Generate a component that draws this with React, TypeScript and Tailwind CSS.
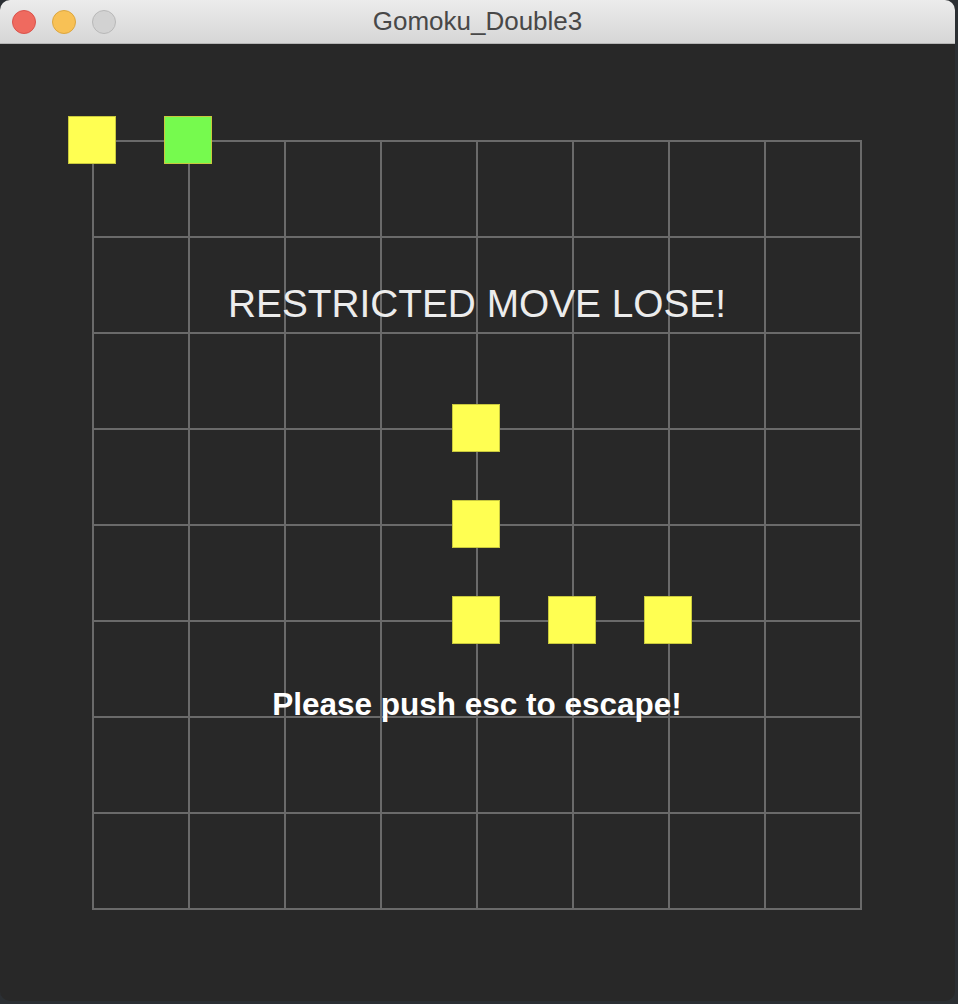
const STONES: [number, number, string][] = [
  [0, 0, "bg-[#ffff52]"],
  [1, 0, "bg-[#76fa4e]"],
  [4, 3, "bg-[#ffff52]"],
  [4, 4, "bg-[#ffff52]"],
  [4, 5, "bg-[#ffff52]"],
  [5, 5, "bg-[#ffff52]"],
  [6, 5, "bg-[#ffff52]"],
];

const LEFT = ["left-[-24px]", "left-[72px]", "left-[168px]", "left-[264px]", "left-[360px]", "left-[456px]", "left-[552px]", "left-[648px]", "left-[744px]"];
const TOP = ["top-[-24px]", "top-[72px]", "top-[168px]", "top-[264px]", "top-[360px]", "top-[456px]", "top-[552px]", "top-[648px]", "top-[744px]"];

export default function App() {
  return (
    <div className="flex h-[1004px] w-[958px] bg-[#2b2f33] font-['Liberation_Sans',Arial,sans-serif]">
      <div className="flex h-[1001px] w-[955px] flex-col overflow-hidden rounded-[10px] bg-[#282828]">
        <div className="relative flex h-[44px] shrink-0 items-center border-b border-[#b5b5b5] bg-gradient-to-b from-[#ececec] to-[#d6d6d6]">
          <div className="flex items-center gap-[16px] pl-[12px]">
            <span className="h-[24px] w-[24px] rounded-full border border-[#d9534c] bg-[#ef6a5f]" />
            <span className="h-[24px] w-[24px] rounded-full border border-[#dba640] bg-[#f8c155]" />
            <span className="h-[24px] w-[24px] rounded-full border border-[#b8b8b8] bg-[#d2d2d2]" />
          </div>
          <p className="absolute inset-x-0 text-center text-[26px] text-[#484848]">Gomoku_Double3</p>
        </div>

        <div className="pl-[92px] pt-[96px]">
          <div className="relative w-[770px]">
            <div className="grid h-[770px] w-[770px] grid-cols-8 border-l-2 border-t-2 border-[#6a6a6a]">
              {Array.from({ length: 64 }).map((_, i) => (
                <div key={i} className="border-b-2 border-r-2 border-[#6a6a6a]" />
              ))}
            </div>

            {STONES.map(([x, y, c]) => (
              <div
                key={`${x}-${y}`}
                className={`absolute h-[48px] w-[48px] border border-[#c8c83e] ${c} ${LEFT[x]} ${TOP[y]}`}
              />
            ))}

            <p className="absolute left-0 right-0 top-[140px] text-center text-[38.8px] leading-[48px] text-[#ececec]">
              RESTRICTED MOVE LOSE!
            </p>
            <p className="absolute left-0 right-0 top-[544px] text-center text-[31.5px] font-bold leading-[40px] text-white">
              Please push esc to escape!
            </p>
          </div>
        </div>
      </div>
    </div>
  );
}
